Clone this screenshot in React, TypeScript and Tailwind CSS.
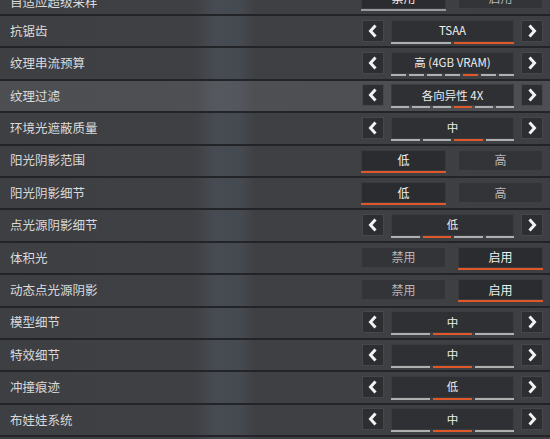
import React from "react";

type Row =
  | { label: string; kind: "select"; value: string; segs: number; active: number; hl?: boolean }
  | { label: string; kind: "toggle"; options: [string, string]; sel: 0 | 1; line?: string };

const rows: Row[] = [
  { label: "自适应超级采样", kind: "toggle", options: ["禁用", "启用"], sel: 0, line: "bg-[#9a9a9a]" },
  { label: "抗锯齿", kind: "select", value: "TSAA", segs: 2, active: 1 },
  { label: "纹理串流预算", kind: "select", value: "高 (4GB VRAM)", segs: 7, active: 4 },
  { label: "纹理过滤", kind: "select", value: "各向异性 4X", segs: 6, active: 3, hl: true },
  { label: "环境光遮蔽质量", kind: "select", value: "中", segs: 4, active: 2 },
  { label: "阳光阴影范围", kind: "toggle", options: ["低", "高"], sel: 0 },
  { label: "阳光阴影细节", kind: "toggle", options: ["低", "高"], sel: 0 },
  { label: "点光源阴影细节", kind: "select", value: "低", segs: 4, active: 1 },
  { label: "体积光", kind: "toggle", options: ["禁用", "启用"], sel: 1 },
  { label: "动态点光源阴影", kind: "toggle", options: ["禁用", "启用"], sel: 1 },
  { label: "模型细节", kind: "select", value: "中", segs: 3, active: 1 },
  { label: "特效细节", kind: "select", value: "中", segs: 3, active: 1 },
  { label: "冲撞痕迹", kind: "select", value: "低", segs: 3, active: 1 },
  { label: "布娃娃系统", kind: "select", value: "中", segs: 3, active: 1 },
];

// 左右箭头按钮
function Arrow({ dir }: { dir: "l" | "r" }) {
  return (
    <div className="w-[22px] h-[22px] flex items-center justify-center bg-[#2d2e31] border border-[#46474b]">
      <svg width="10" height="14" viewBox="0 0 10 14">
        <polyline
          points={dir === "l" ? "7.5,1.5 2.5,7 7.5,12.5" : "2.5,1.5 7.5,7 2.5,12.5"}
          fill="none"
          stroke="#f2f2f2"
          strokeWidth="3"
          strokeLinejoin="miter"
        />
      </svg>
    </div>
  );
}

function Select({ value, segs, active }: { value: string; segs: number; active: number }) {
  return (
    <div className="flex items-start gap-[7px]">
      <Arrow dir="l" />
      <div className="w-[123px] h-[24px] flex flex-col">
        <div className="h-[22px] bg-[#2f3033] border border-[#3b3c40] flex items-center justify-center text-[11.5px] text-[#ececec]">
          {value}
        </div>
        <div className="flex gap-[3px] h-[2px]">
          {Array.from({ length: segs }).map((_, i) => (
            <div key={i} className={`flex-1 ${i === active ? "bg-[#e0582a]" : "bg-[#b0b0b1]"}`} />
          ))}
        </div>
      </div>
      <Arrow dir="r" />
    </div>
  );
}

function Toggle({ options, sel, line }: { options: [string, string]; sel: 0 | 1; line?: string }) {
  return (
    <div className="flex gap-[12px]">
      {options.map((o, i) => (
        <div key={i} className="w-[85px] flex flex-col">
          <div
            className={`h-[21px] border flex items-center justify-center text-[12px] ${
              i === sel ? "bg-[#2b2c2f] border-[#3a3b3f] text-[#f0f0f0]" : "bg-[#333438] border-[#3f4044] text-[#b8b8b8]"
            }`}
          >
            {o}
          </div>
          <div className={`h-[2px] ${i === sel ? line ?? "bg-[#e0582a]" : ""}`} />
        </div>
      ))}
    </div>
  );
}

export default function App() {
  return (
    <div
      className="w-[550px] h-[439px] overflow-hidden bg-[#26272a] bg-[linear-gradient(90deg,#3e3f43_0px,#3f4044_195px,#474b52_215px,#454950_240px,#3f4044_255px,#3e3f43_550px)]"
      style={{ fontFamily: '"Noto Sans CJK SC", "Noto Sans", sans-serif' }}
    >
      <div className="mt-[-16.4px]">
        {rows.map((r, i) => (
          <div
            key={i}
            className={`h-[32.4px] border-b-2 border-[#232427] flex items-center justify-between pl-[10px] pr-[7px] ${
              r.kind === "select" && r.hl ? "bg-white/[0.08]" : ""
            }`}
          >
            <span className={`text-[12.5px] text-[#dadada] ${i === 0 ? "pt-[8px]" : ""}`}>{r.label}</span>
            <div className="pt-[1px]">
              {r.kind === "select" ? (
                <Select value={r.value} segs={r.segs} active={r.active} />
              ) : (
                <Toggle options={r.options} sel={r.sel} line={r.line} />
              )}
            </div>
          </div>
        ))}
      </div>
    </div>
  );
}
